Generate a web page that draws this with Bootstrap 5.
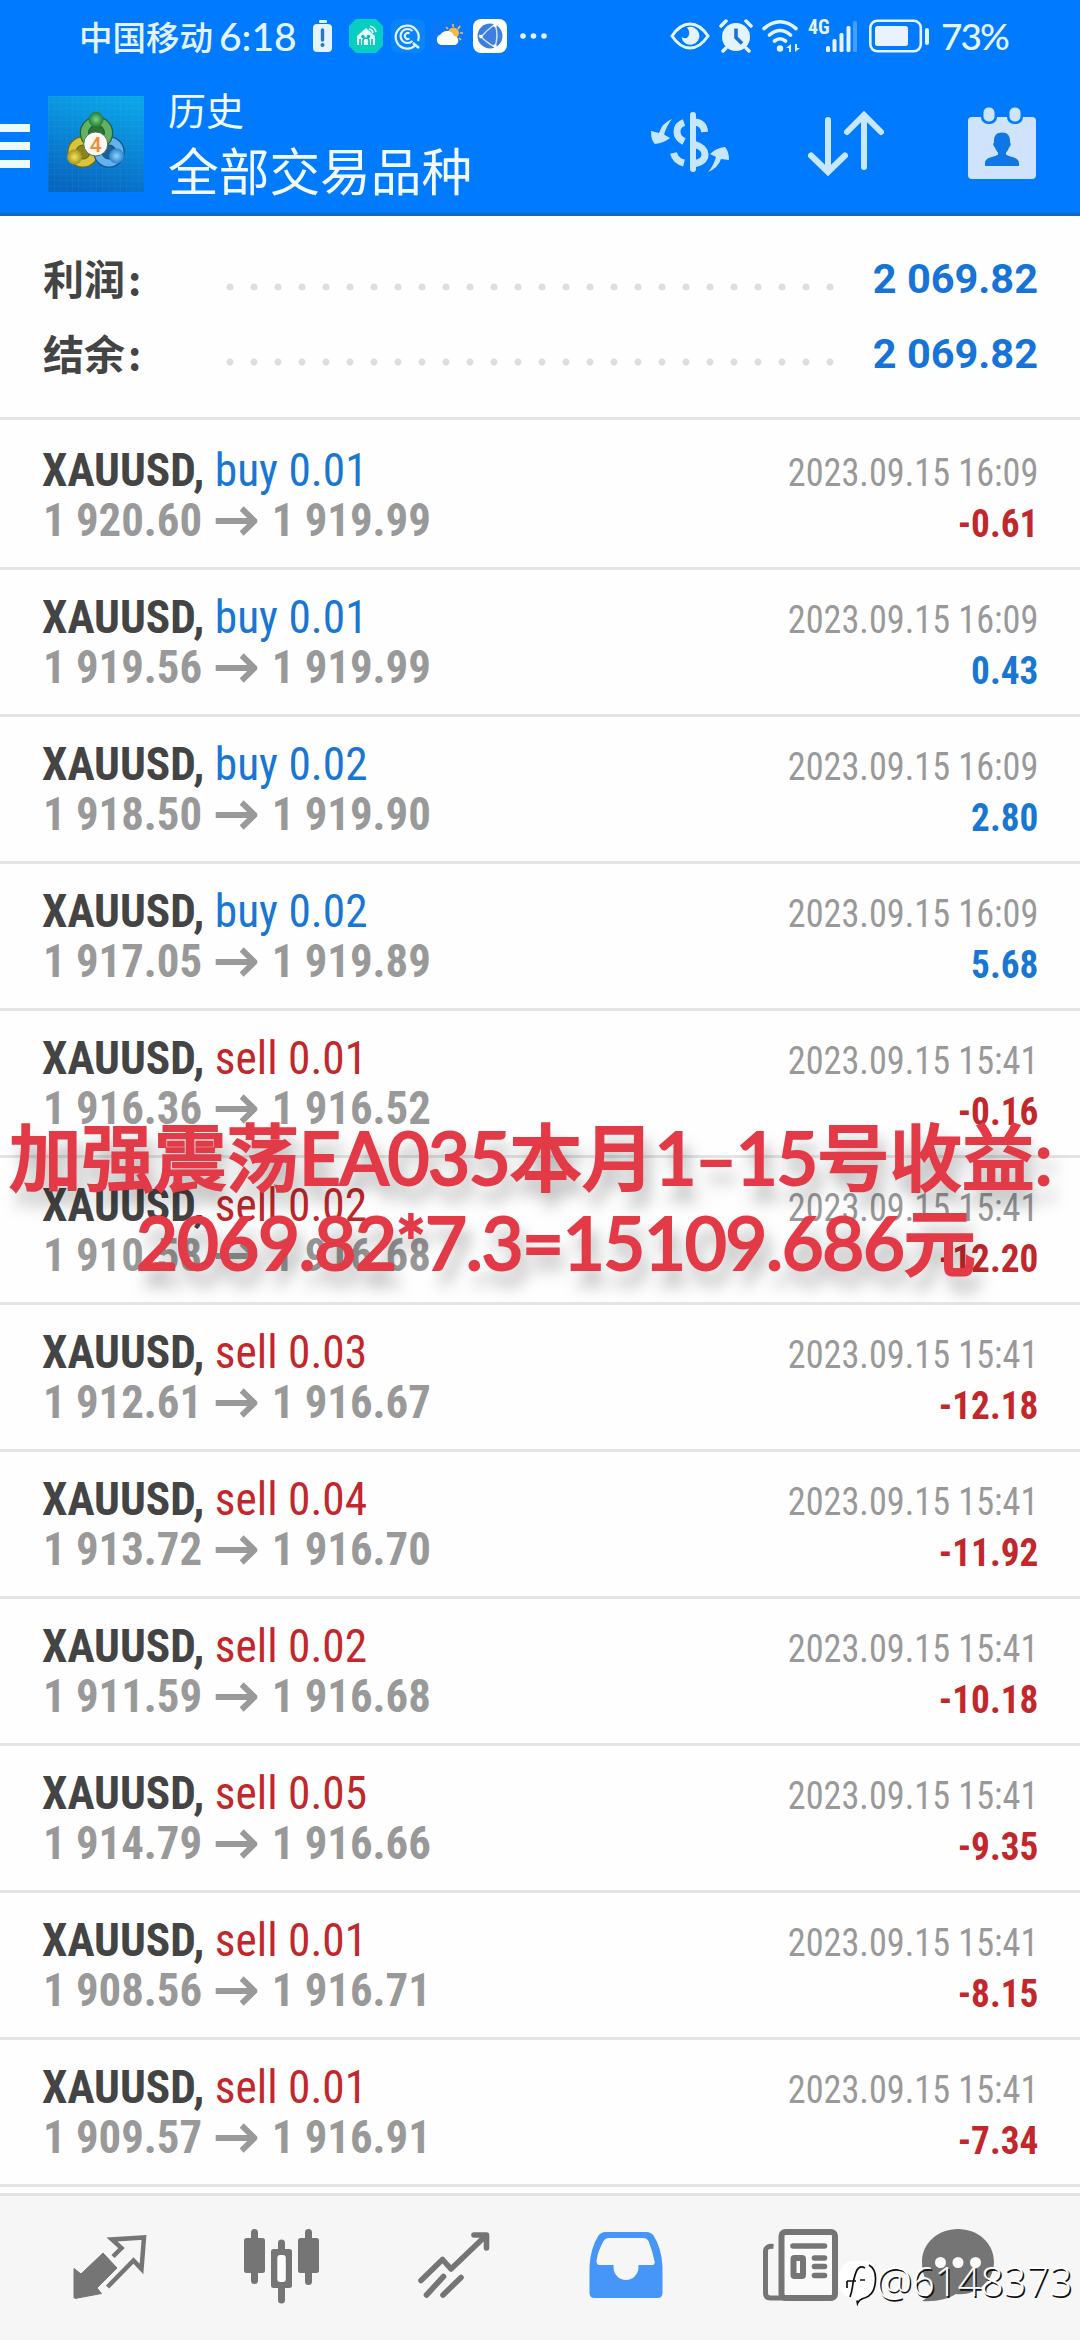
<!DOCTYPE html>
<html lang="zh-CN">
<head>
<meta charset="utf-8">
<meta name="viewport" content="width=device-width, initial-scale=1">
<title>历史</title>
<link href="https://cdn.jsdelivr.net/npm/bootstrap@5.3.0/dist/css/bootstrap.min.css" rel="stylesheet">
<style>
body{width:1080px;height:2340px;overflow:hidden;position:relative;background:#fefefe;font-family:Roboto,"Noto Sans CJK SC",sans-serif;line-height:1}
svg{display:block;flex:none}
.top-zone{height:216px;background:#007aff;border-bottom:3px solid #1468c2;color:#f0faff}
.status-line{height:72px;padding:0 73px 0 79px;color:#e3f4ff}
.carrier{font:500 33.5px "Noto Sans CJK SC",sans-serif;line-height:36px}
.clock{font:500 39px Lato,sans-serif;line-height:40px;margin-left:6px;width:94px}
.net{font:700 20px "Roboto Condensed",Roboto,sans-serif;font-stretch:75%;line-height:20px;align-self:flex-start;margin:1px 0 0 8px;width:18px}
.pct{font:500 37px Lato,sans-serif;line-height:40px;width:66px;margin-left:11px;white-space:nowrap;letter-spacing:-2px}
.gap-a{margin-left:7px}.gap-b{margin-left:9px}.gap-c{margin-left:11px}
.app-line{height:141px}
.burger{margin-top:52px}
.logo-tile{margin:24px 0 0 18px}
.titles{padding:17px 0 0 24px}
.t1{font:38px "Noto Sans CJK SC",sans-serif;line-height:40px}
.t2{font:50.7px "Noto Sans CJK SC",sans-serif;line-height:60px;margin-top:10px}
.tools{padding:34px 42px 0 0}
.sum-zone{height:204px;padding:25px 42px 0 43px;border-bottom:3px solid #e4e4e4;margin-bottom:3px}
.sum-row{height:75px}
.sum-key{width:181px;color:#444;font:700 41px "Noto Sans CJK SC",sans-serif;line-height:60px;padding-bottom:4px}
.sum-key span{margin-left:3px}
.dots{width:624px;height:8px;margin-top:16px;background:radial-gradient(circle at 6px 4px,#dedede 3px,transparent 4px) 0 0/24px 8px repeat-x}
.sum-val{color:#1673d8;font-weight:700;font-size:41.5px;flex:1;text-align:right;white-space:nowrap}
.deal{height:147px;border-bottom:3px solid #e4e4e4;padding:22px 42px 0 42px;font-family:"Roboto Condensed",Roboto,sans-serif;font-stretch:75%;white-space:pre}
.deal svg{margin:2px 15px 0 14px}
.sym,.prc{font-size:47px;line-height:50px;height:50px;font-weight:700;color:#444;transform:scaleX(.965);transform-origin:0 50%}
.sym span{font-weight:400}
.prc{color:#999;transform:scaleX(.953);padding-left:1px}
.stamp{padding-top:2px;font-size:39.4px;line-height:51px;color:#999}
.stamp div{transform:scaleX(.92);transform-origin:100% 50%}
.stamp .gain{font-weight:700;transform:scaleX(.945)}
.up{color:#1976d2}.down{color:#c1272b}
.tabs{position:absolute;left:0;right:0;bottom:0;height:147px;background:#f6f6f6;border-top:3px solid #e4e4e4;padding:33px 0 0 24px}
.tabs a{width:172px;display:flex;justify-content:center}
.tabs a:last-child{width:148px}
.promo{position:absolute;left:9px;top:1115px;white-space:pre;color:#e33a47;font:500 72.5px Lato,"Noto Sans CJK SC",sans-serif;line-height:84.5px;text-shadow:6px 15px 16px rgba(0,0,0,.34);-webkit-text-stroke:2px #e33a47}
.promo i{font-style:normal;letter-spacing:-1.4px}
.promo .second{padding-left:127px}
.wm{position:absolute;left:838px;top:2257px;color:#fff}
.wm span{font:300 40.5px "Open Sans",sans-serif;line-height:48px;text-shadow:1.5px 1.5px 0 #111;margin-left:-1px;letter-spacing:-.2px}
</style>
</head>
<body>
<header class="top-zone">
  <div class="status-line d-flex align-items-center">
    <span class="carrier">中国移动</span><span class="clock">6:18</span>
    <svg width="20" height="34" viewBox="0 0 20 34"><rect x="6" y="1" width="8" height="3" rx="1" fill="#e3f4ff"/><rect x="0" y="5" width="19" height="28" rx="4" fill="#e3f4ff"/><path d="M9.5 11v10" stroke="#2a72cf" stroke-width="3.4" stroke-linecap="round"/><circle cx="9.5" cy="26" r="2" fill="#2a72cf"/></svg>
    <svg class="ms-3" width="34" height="34" viewBox="0 0 34 34"><path d="M7 0h20l7 7v20l-7 7H7l-7-7V7z" fill="#06cfc2"/><path d="M8 17L17 9l9 8v9H8z" fill="#e8fffc"/><path d="M14 26v-4a3 3 0 0 1 6 0v4M11 26v-6M23 26v-6" stroke="#06b8b0" stroke-width="1.6" fill="none"/><circle cx="14" cy="17.500" r="1.700" fill="#06b8b0"/><circle cx="19.500" cy="17.500" r="1.700" fill="#06b8b0"/><path d="M20 10a5 5 0 0 1 4 4M21 7a8 8 0 0 1 6 6" stroke="#e8fffc" stroke-width="1.600" fill="none"/></svg>
    <svg class="ms-2" width="34" height="34" viewBox="0 0 34 34"><rect width="34" height="34" rx="8" fill="#0a84fb"/><path d="M24.500 26A11.500 11.500 0 1 1 27 22" fill="none" stroke="#e3f4ff" stroke-width="2.200"/><path d="M22 24l6 5" stroke="#e3f4ff" stroke-width="2.400"/><path d="M21.500 22A7 7 0 1 1 21.500 12" fill="none" stroke="#e3f4ff" stroke-width="2.200"/><path d="M18.500 19.500a3 3 0 1 1 0-5" fill="none" stroke="#e3f4ff" stroke-width="2"/></svg>
    <svg class="gap-a" width="34" height="34" viewBox="0 0 34 34"><rect width="34" height="34" rx="8" fill="#0a78f8"/><path d="M21 5v3M28 7l-2 3M31 14h-3M14 8l2 2M29 21l-2-2" stroke="#f3c352" stroke-width="1.600"/><circle cx="21.500" cy="14" r="5.500" fill="#f8b93c"/><path d="M9 26a5.500 5.500 0 0 1-.5-10.500 7.500 7.500 0 0 1 13.500 1.500 4.600 4.600 0 0 1 1 9z" fill="#fff"/></svg>
    <svg class="gap-a" width="34" height="34" viewBox="0 0 34 34"><rect width="34" height="34" rx="8" fill="#fff"/><circle cx="17" cy="17" r="12.500" fill="#3c7fdf"/><path d="M7 19Q14 11 22 5M6 16q8 8 16 12M22 5q4 11 0 23" stroke="#cfe3ff" stroke-width="1.500" fill="none"/><circle cx="22" cy="6.500" r="1.700" fill="#fff"/><circle cx="8" cy="17.500" r="1.700" fill="#fff"/><circle cx="22" cy="27" r="1.700" fill="#fff"/></svg>
    <svg class="gap-c" width="30" height="8" viewBox="0 0 30 8"><g fill="#e3f4ff"><circle cx="5" cy="4" r="2.800"/><circle cx="15.500" cy="4" r="2.800"/><circle cx="26" cy="4" r="2.800"/></g></svg>
    <div class="ms-auto d-flex align-items-center">
      <svg width="40" height="28" viewBox="0 0 40 28"><path d="M2 14Q10 2 20 2t18 12Q30 26 20 26T2 14z" fill="none" stroke="#e3f4ff" stroke-width="3"/><path d="M17 5.500a9 9 0 1 1-5.500 9.500q5 3 7-1t-1.500-8.500z" fill="#e3f4ff"/></svg>
      <svg class="gap-b" width="34" height="34" viewBox="0 0 34 34"><circle cx="17" cy="18" r="14" fill="#e3f4ff"/><path d="M2 7l5-5M32 7l-5-5M7 29l-3 3M27 29l3 3" stroke="#e3f4ff" stroke-width="3.500" stroke-linecap="round"/><path d="M17 9.500v9l6 6" stroke="#1a70d8" stroke-width="3.600" fill="none"/></svg>
      <svg class="gap-b" width="38" height="34" viewBox="0 0 38 34"><g fill="none" stroke="#e3f4ff" stroke-width="3.600" stroke-linecap="round"><path d="M2 9.500q16-13.500 32 0M7.500 16q10.500-9 21 0M12.500 22q5.500-4.500 11 0"/></g><circle cx="18" cy="29.500" r="3.200" fill="#e3f4ff"/><path d="M24 29l5-4v8h-2v-4zM38 29l-5 4v-8h2v4z" fill="#e3f4ff"/></svg>
      <span class="net">4G</span>
      <svg width="32" height="34" viewBox="0 0 32 34"><g fill="#e3f4ff"><rect x="0" y="27" width="4" height="6" rx="1.500"/><rect x="6.500" y="20" width="4" height="13" rx="1.500"/><rect x="13.500" y="14" width="4" height="19" rx="1.500"/><rect x="20.500" y="7" width="4" height="26" rx="1.500"/><rect x="27" y="2" width="4" height="31" rx="1.500" opacity=".3"/></g></svg>
      <svg class="gap-c" width="61" height="34" viewBox="0 0 61 34"><rect x="1.300" y="1.800" width="50.500" height="30.500" rx="7" fill="none" stroke="#e3f4ff" stroke-width="2.600"/><rect x="6" y="7" width="33" height="20" rx="2.500" fill="#e9f3ff"/><rect x="56" y="9" width="4" height="17" rx="2" fill="#e3f4ff"/></svg>
      <span class="pct">73%</span>
    </div>
  </div>
  <div class="app-line d-flex">
    <svg class="burger" width="30" height="45" viewBox="0 0 30 45"><path d="M0 4h30M0 22h30M0 40h30" stroke="#ecf9ff" stroke-width="8"/></svg>
    <svg class="logo-tile" width="96" height="96" viewBox="0 0 96 96">
      <defs><linearGradient id="sq" x1=".7" y1="0" x2=".4" y2="1"><stop offset="0" stop-color="#0aa5e8"/><stop offset=".5" stop-color="#0985d6"/><stop offset="1" stop-color="#0767c0"/></linearGradient>
      <pattern id="gr" width="6" height="6" patternUnits="userSpaceOnUse"><path d="M0 0H6M0 0V6" stroke="#fff" stroke-opacity=".05"/></pattern>
      <radialGradient id="g1"><stop offset="0" stop-color="#7ed08a"/><stop offset="1" stop-color="#1d7d35"/></radialGradient>
      <radialGradient id="y1"><stop offset="0" stop-color="#f2e36a"/><stop offset="1" stop-color="#a79414"/></radialGradient>
      <radialGradient id="b1"><stop offset="0" stop-color="#8fd2ff"/><stop offset="1" stop-color="#2a84cd"/></radialGradient></defs>
      <rect width="96" height="96" fill="url(#sq)"/><rect width="96" height="96" fill="url(#gr)"/>
      <circle cx="35" cy="56" r="11" fill="#8a8420" stroke="#6d6a18" stroke-width="9.500"/><circle cx="35" cy="56" r="11" fill="none" stroke="#d6c53a" stroke-width="7"/>
      <circle cx="61" cy="56" r="11" fill="#1c5f9c" stroke="#14558f" stroke-width="9.500"/><circle cx="61" cy="56" r="11" fill="none" stroke="#63b2ec" stroke-width="7"/>
      <circle cx="48.500" cy="37" r="12" fill="#2b7436" stroke="#1c6330" stroke-width="9.500"/><circle cx="48.500" cy="37" r="12" fill="none" stroke="#64b064" stroke-width="7"/>
      <circle cx="48" cy="23.500" r="7.500" fill="url(#g1)"/><circle cx="26.500" cy="61" r="7.500" fill="url(#y1)"/><circle cx="68.500" cy="60" r="7.500" fill="url(#b1)"/>
      <circle cx="47.700" cy="48" r="12" fill="#fbf7f2" stroke="#58724f"/><text x="47.700" y="55.500" text-anchor="middle" font-family="Roboto" font-size="21" font-weight="500" fill="#ef8a35">4</text>
    </svg>
    <div class="titles"><div class="t1">历史</div><div class="t2">全部交易品种</div></div>
    <div class="tools d-flex ms-auto">
      <svg width="82" height="76" viewBox="649 106 82 76"><g fill="none" stroke="#c6e6ff"><path d="M693 115v54" stroke-width="6" stroke-linecap="round"/><path d="M684 122.500q-7 2.500-7 9t7 10M673.500 153q2 8 10.500 10" stroke-width="7"/><path d="M695 122q9 1 9.500 10" stroke-width="7"/><path d="M695 144.500q10 3 10 10t-10 9" stroke-width="7"/></g><path d="M672 119Q662 123 659 133L651 131Q651 141 655 144Q664 143 670 138L664 134.500Q667 125 672 119zM708 172Q718 168 721 159L729 160Q729 151 725 147Q716 148 710 154L716 157Q713 167 708 172z" fill="#c6e6ff"/></svg>
      <svg width="235" height="76" viewBox="731 106 235 76"><path d="M828 120v51M811 155.500l17 16.500 17-16.500M864 167v-51M847 132l17-17 17 17" fill="none" stroke="#c9e8ff" stroke-width="6" stroke-linecap="round"/></svg>
      <svg width="72" height="76" viewBox="966 106 72 76"><rect x="968" y="117" width="68" height="62" rx="4" fill="#cfe3fd"/><rect x="981" y="104" width="16" height="20" rx="7" fill="#007aff"/><rect x="1007" y="104" width="16" height="20" rx="7" fill="#007aff"/><rect x="983.500" y="107.500" width="11" height="14" rx="5" fill="#cfe3fd"/><rect x="1009.500" y="107.500" width="11" height="14" rx="5" fill="#cfe3fd"/><path d="M1002 132.500c6 0 8.500 4 8 10 1.500 1 .5 4-1 5-1 3-2 4-3 5v2c4 3 12 2 13 8v3.500h-34V162.500c1-6 9-5 13-8v-2c-1-1-2-2-3-5-1.500-1-2.500-4-1-5-.5-6 2-10 8-10z" fill="#0f76e6"/></svg>
    </div>
  </div>
</header>

<section class="sum-zone">
  <div class="sum-row d-flex align-items-center"><div class="sum-key">利润<span>:</span></div><div class="dots"></div><div class="sum-val">2 069.82</div></div>
  <div class="sum-row d-flex align-items-center"><div class="sum-key">结余<span>:</span></div><div class="dots"></div><div class="sum-val">2 069.82</div></div>
</section>

<main id="deals"></main>

<nav class="tabs d-flex">
  <a><svg width="76" height="76" viewBox="72 2229 76 76"><path d="M103 2253l14 15-20 20 4.500 5.500-26.500 5-1-1v-29l7 5.500z" fill="#757575" stroke="#757575" stroke-linejoin="round"/><path d="M113 2256.500l8.500-8.500-9.500-8.500 32-2-2.500 31.500-8-8.500-26 26.500" fill="none" stroke="#757575" stroke-width="4.500"/></svg></a>
  <a><svg width="76" height="76" viewBox="244 2229 76 76"><path d="M254.500 2232.500v48M281.500 2243v57M308.500 2232.500v49" stroke="#757575" stroke-width="7" stroke-linecap="round"/><g fill="#757575"><rect x="244" y="2238" width="21" height="35" rx="2.500"/><rect x="271" y="2249" width="21" height="39" rx="2.500"/><rect x="298" y="2238" width="21" height="35" rx="2.500"/></g><rect x="277.300" y="2255" width="8.500" height="27" rx="3" fill="#fefefe"/></svg></a>
  <a><svg width="76" height="76" viewBox="416 2229 76 76"><path d="M421 2280.500l21.500-21 8.500 9.500 35-33.500M474 2235h12.500v13M426.500 2295l17-18.500M443 2295l18-17.500" fill="none" stroke="#757575" stroke-width="5.600" stroke-linecap="round" stroke-linejoin="round"/></svg></a>
  <a><svg width="76" height="76" viewBox="-1.500 -3 76 76"><path fill-rule="evenodd" fill="#4596f8" d="M0 34Q1 16 9 3.500 11.500 0 16 0H57q4.500 0 7 3.500Q72 16 73 34V61q0 5-5 5H5q-5 0-5-5zM19 6Q16 6 14 9 8 20 7 29q0 4 3 4H24v2a12.500 13 0 0 0 25 0V33H62q4 0 3-4Q63 19 59 9 57 6 54 6z"/></svg></a>
  <a><svg width="76" height="76" viewBox="-2.500 0 76 76" overflow="visible"><rect x="19" y="3" width="53.500" height="66" rx="4" fill="#fafafa" stroke="#757575" stroke-width="6"/><path d="M11 17.500q-8-1-8 5V64q0 5 5 5h14" fill="none" stroke="#757575" stroke-width="5"/><path d="M30.500 17h31.500M52 29h10M52 37.500h10M52 46.500h10" stroke="#757575" stroke-width="5.600" stroke-linecap="round"/><rect x="31" y="29" width="9.500" height="18" rx="1" fill="none" stroke="#757575" stroke-width="6"/></svg></a>
  <a><svg width="76" height="76" viewBox="920 2229 76 76"><path d="M958 2229c20 0 36 14 36 33 0 20-18 34-38 32-8 5-20 8-34 7 7-4 9-9 9-14-6-6-9-15-9-25 0-19 16-33 36-33z" fill="#757575"/><g fill="#fafafa"><circle cx="940.500" cy="2262.500" r="5.500"/><circle cx="958" cy="2262.500" r="5.500"/><circle cx="975.500" cy="2262.500" r="5.500"/></g></svg></a>
</nav>

<div class="promo">加强震荡<i>EA035</i>本月<i>1–15</i>号收益:
<span class="second"><i>2069.82*7.3=15109.686</i>元</span></div>

<div class="wm d-flex"><svg width="39" height="50" viewBox="0 0 39 50"><path d="M14 4h14q10 2 10 16 0 18-12 21-5 1-6 5-1-5-5-5Q0 40 1 22 1 6 14 4z" fill="#fff"/><path d="M31 8q7 4 6.500 15-.5 15-11 18-5 1-7 5.500l-.5-3M27 11q-5-3-8 2-2 4-4 13-1 9-3 14M9 24h9M22 23h5M9 24v7" fill="none" stroke="#111" stroke-width="1.700"/></svg><span>@6148373</span></div>

<script src="https://cdn.jsdelivr.net/npm/bootstrap@5.3.0/dist/js/bootstrap.bundle.min.js"></script>
<script>
const deals = [
  ['buy 0.01','1 920.60','1 919.99','16:09','-0.61'],
  ['buy 0.01','1 919.56','1 919.99','16:09','0.43'],
  ['buy 0.02','1 918.50','1 919.90','16:09','2.80'],
  ['buy 0.02','1 917.05','1 919.89','16:09','5.68'],
  ['sell 0.01','1 916.36','1 916.52','15:41','-0.16'],
  ['sell 0.02','1 910.58','1 916.68','15:41','-12.20'],
  ['sell 0.03','1 912.61','1 916.67','15:41','-12.18'],
  ['sell 0.04','1 913.72','1 916.70','15:41','-11.92'],
  ['sell 0.02','1 911.59','1 916.68','15:41','-10.18'],
  ['sell 0.05','1 914.79','1 916.66','15:41','-9.35'],
  ['sell 0.01','1 908.56','1 916.71','15:41','-8.15'],
  ['sell 0.01','1 909.57','1 916.91','15:41','-7.34']
];
const arrow = '<svg width="44" height="30" viewBox="0 0 44 30"><path d="M0 15h40M27.500 2.500L41 15 27.500 27.500" fill="none" stroke="#999" stroke-width="6"/></svg>';
document.getElementById('deals').innerHTML = deals.map(([side, from, to, time, gain]) =>
  `<div class="deal d-flex justify-content-between"><div><div class="sym">XAUUSD, <span class="${side[0] === 'b' ? 'up' : 'down'}">${side}</span></div><div class="prc d-flex align-items-center"><span>${from}</span>${arrow}<span>${to}</span></div></div><div class="stamp text-end"><div>2023.09.15 ${time}</div><div class="gain ${gain[0] === '-' ? 'down' : 'up'}">${gain}</div></div></div>`
).join('');
</script>
</body>
</html>
